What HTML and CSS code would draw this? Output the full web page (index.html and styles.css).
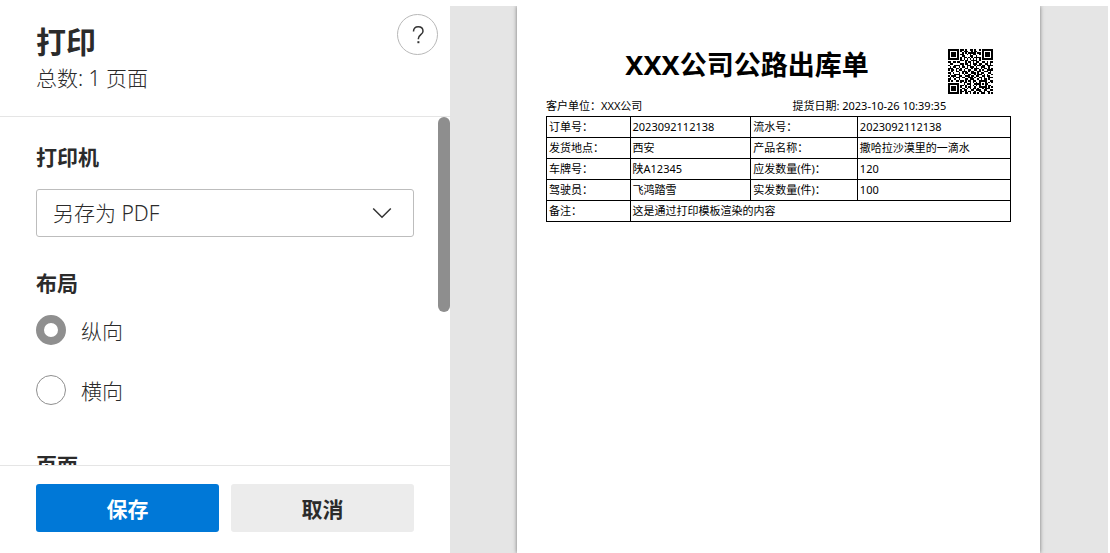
FILE: index.html
```html
<!DOCTYPE html>
<html lang="zh-CN">
<head>
<meta charset="utf-8">
<title>打印</title>
<link rel="stylesheet" href="styles.css">
</head>
<body>
<div class="dialog">
  <form class="panel">
    <header class="panel-header">
      <div>
        <h1 class="panel-title">打印</h1>
        <p class="panel-summary">总数: 1 页面</p>
      </div>
      <button class="help" type="button" aria-label="帮助">
        <svg width="16" height="20" viewBox="0 0 16 20" fill="none" stroke="#333" stroke-width="1.5"><path d="M3.5 6.5C3.5 3.5 5.2 1.8 8.2 1.8S13 3.6 13 6.2C13 9.6 8.4 9.8 8.4 13.5V14.2"/><path d="M8.4 16.2V18.2" stroke-width="2"/></svg>
      </button>
    </header>
    <div class="panel-body">
      <div class="settings">
        <label class="heading" for="printer">打印机</label>
        <div class="select-box">
          <select id="printer" class="select"><option>另存为 PDF</option></select>
          <svg class="chevron" width="20" height="12" viewBox="0 0 20 12" fill="none" stroke="#333" stroke-width="1.5"><path d="M1.2 1.5L10 10.3L18.8 1.5"/></svg>
        </div>
        <fieldset class="group">
          <legend class="heading">布局</legend>
          <div class="options">
            <label class="option"><input class="radio" type="radio" name="layout" checked>纵向</label>
            <label class="option"><input class="radio" type="radio" name="layout">横向</label>
          </div>
        </fieldset>
        <h2 class="heading pages">页面</h2>
      </div>
      <div class="scroll-thumb"></div>
    </div>
    <footer class="panel-footer">
      <button class="btn btn-primary" type="submit">保存</button>
      <button class="btn" type="button">取消</button>
    </footer>
  </form>
  <main class="preview">
    <article class="paper">
      <div class="paper-head">
        <h2 class="paper-title">XXX公司公路出库单</h2>
        <svg class="qr" id="qr" viewBox="0 0 29 29" role="img" aria-label="二维码" shape-rendering="crispEdges"></svg>
      </div>
      <div class="info">
        <span>客户单位：XXX公司</span>
        <span>提货日期: 2023-10-26 10:39:35</span>
      </div>
      <table class="order">
        <colgroup><col class="c1"><col class="c2"><col class="c3"><col class="c4"></colgroup>
        <tbody>
          <tr><th scope="row">订单号：</th><td>2023092112138</td><th scope="row">流水号：</th><td>2023092112138</td></tr>
          <tr><th scope="row">发货地点：</th><td>西安</td><th scope="row">产品名称：</th><td>撒哈拉沙漠里的一滴水</td></tr>
          <tr><th scope="row">车牌号：</th><td>陕A12345</td><th scope="row">应发数量(件)：</th><td>120</td></tr>
          <tr><th scope="row">驾驶员：</th><td>飞鸿踏雪</td><th scope="row">实发数量(件)：</th><td>100</td></tr>
          <tr><th scope="row">备注：</th><td colspan="3">这是通过打印模板渲染的内容</td></tr>
        </tbody>
      </table>
    </article>
  </main>
</div>
<script src="qr.js"></script>
</body>
</html>
```
FILE: styles.css
```css
* { box-sizing: border-box; }
body {
  margin: 0;
  background: #fff;
  color: #2b2b2b;
  font-family: "Noto Sans", "Noto Sans CJK SC", sans-serif;
}
h1, h2, p { margin: 0; }
button, select { font-family: inherit; }

.dialog {
  display: flex;
  height: 100vh;
  padding: 6px 2px 0 0;
}

/* Settings panel */
.panel {
  flex: 0 0 450px;
  display: flex;
  flex-direction: column;
  font-size: 21px;
  font-weight: 300;
}
.panel-header {
  display: flex;
  justify-content: space-between;
  align-items: flex-start;
  padding: 8px 12px 20px 36px;
  border-bottom: 1px solid #e5e5e5;
}
.panel-title {
  margin-top: 10px;
  font-size: 30px;
  line-height: 36px;
  font-weight: 700;
}
.panel-summary { line-height: 36px; }
.help {
  display: flex;
  align-items: center;
  justify-content: center;
  width: 41px;
  height: 41px;
  padding: 0;
  border: 1px solid #b8b8b8;
  border-radius: 50%;
  background: #fff;
}
.panel-body {
  flex: 1;
  min-height: 0;
  display: flex;
  align-items: flex-start;
  overflow: hidden;
}
.settings {
  flex: 1;
  padding: 26px 24px 0 36px;
}
.heading {
  display: block;
  padding: 0;
  font-size: 21px;
  line-height: 28px;
  font-weight: 700;
}
.select-box {
  display: grid;
  align-items: center;
  margin: 18px 0 32px;
}
.select, .chevron { grid-area: 1 / 1; }
.select {
  appearance: none;
  width: 100%;
  height: 48px;
  padding: 0 16px;
  border: 1px solid #bdbdbd;
  border-radius: 3px;
  background: #fff;
  color: inherit;
  font-size: 21px;
  font-weight: 300;
}
.chevron {
  justify-self: end;
  margin-right: 22px;
  pointer-events: none;
}
.group { margin: 0; padding: 0; border: 0; }
.options {
  display: grid;
  gap: 30px;
  padding-top: 18px;
}
.option {
  display: flex;
  align-items: center;
  gap: 15px;
  height: 30px;
}
.radio {
  appearance: none;
  width: 30px;
  height: 30px;
  margin: 0;
  border: 1px solid #8f8f8f;
  border-radius: 50%;
  background: #fff;
}
.radio:checked { border-width: 8px; }
.pages { margin-top: 46px; }
.scroll-thumb {
  width: 12px;
  height: 56%;
  border-radius: 6px;
  background: #8e8e8e;
}
.panel-footer {
  display: flex;
  gap: 12px;
  padding: 18px 36px 21px;
  border-top: 1px solid #e5e5e5;
}
.btn {
  flex: 1;
  height: 48px;
  border: 0;
  border-radius: 3px;
  background: #ececec;
  color: inherit;
  font-size: 21px;
  font-weight: 700;
}
.btn-primary {
  background: #0078d7;
  color: #fff;
}

/* Page preview */
.preview {
  flex: 1;
  display: flex;
  padding: 0 68px 0 67px;
  background: #e5e5e5;
  overflow: hidden;
}
.paper {
  flex: 1;
  padding: 43px 29px 0;
  background: #fff;
  box-shadow: 0 0 4px rgba(0, 0, 0, 0.5);
  color: #000;
  font-size: 11px;
  line-height: 16px;
}
.paper-head {
  display: flex;
  align-items: flex-start;
  padding-right: 18px;
}
.paper-title {
  flex: 1;
  text-align: center;
  font-size: 27px;
  line-height: 32px;
}
.qr { width: 45px; height: 45px; }
.info {
  display: grid;
  grid-template-columns: 53% 47%;
  padding: 4px 0 2px;
}
.order {
  width: 100%;
  table-layout: fixed;
  border-collapse: collapse;
}
.order th, .order td {
  height: 21px;
  padding: 0 2px;
  border: 1px solid #000;
  text-align: left;
  font-weight: 400;
  white-space: nowrap;
}
.c1 { width: 18%; }
.c2 { width: 26%; }
.c3 { width: 23%; }
.c4 { width: 33%; }
```
FILE: qr.js
```js
const rows = [
  "#######.##.#..##.#..#.#######",
  "#.....#.#.###..#.##...#.....#",
  "#.###.#..#.#.#####.##.#.###.#",
  "#.###.#.##..#.#.##..#.#.###.#",
  "#.###.#..##...##..#...#.###.#",
  "#.....#.#.##.#.#.####.#.....#",
  "#######.#.#.#.#.#.#.#.#######",
  "........##.##..####.#........",
  "##.##.##...#.##.#.##..##.#.##",
  ".##.....##.##.#.###.##..##.#.",
  "#...####.#..###..#.##.##.####",
  ".#.##..#.##.#.###.#..###..#..",
  "###..##.#..##..#.###.#.##.#.#",
  "#.##.#.##.#..##..##.#.#..####",
  "..#..##..###.#.##..##..###.#.",
  "##.#...#.#.##..###.#.##...##.",
  ".#..####..#..##..#.###.#.#..#",
  "#.###..##..###.##.##..##.##..",
  ".#.#.###.##..###.#..##.#..###",
  "##..#..#...##.###..#.#.##.#..",
  "#.#..##.##.#.##.##..#####..##",
  "........#.##..#.#.#.#...#.#.#",
  "#######...#.###..####.#.##...",
  "#.....#.##.#..#.#.#.#...#.##.",
  "#.###.#.#..#.##..#..#####.#.#",
  "#.###.#..##.#.#.##.#..#.###..",
  "#.###.#.#.##...##.###..##..##",
  "#.....#.##.#.##..#..##.#.##..",
  "#######.#..##.#.##.#.###..#.#"
];
const svgNs = "http://www.w3.org/2000/svg";
const path = document.createElementNS(svgNs, "path");
path.setAttribute("d", rows.map((row, y) =>
  [...row].map((cell, x) => cell === "#" ? `M${x} ${y}h1v1h-1z` : "").join("")
).join(""));
document.getElementById("qr").append(path);
```
